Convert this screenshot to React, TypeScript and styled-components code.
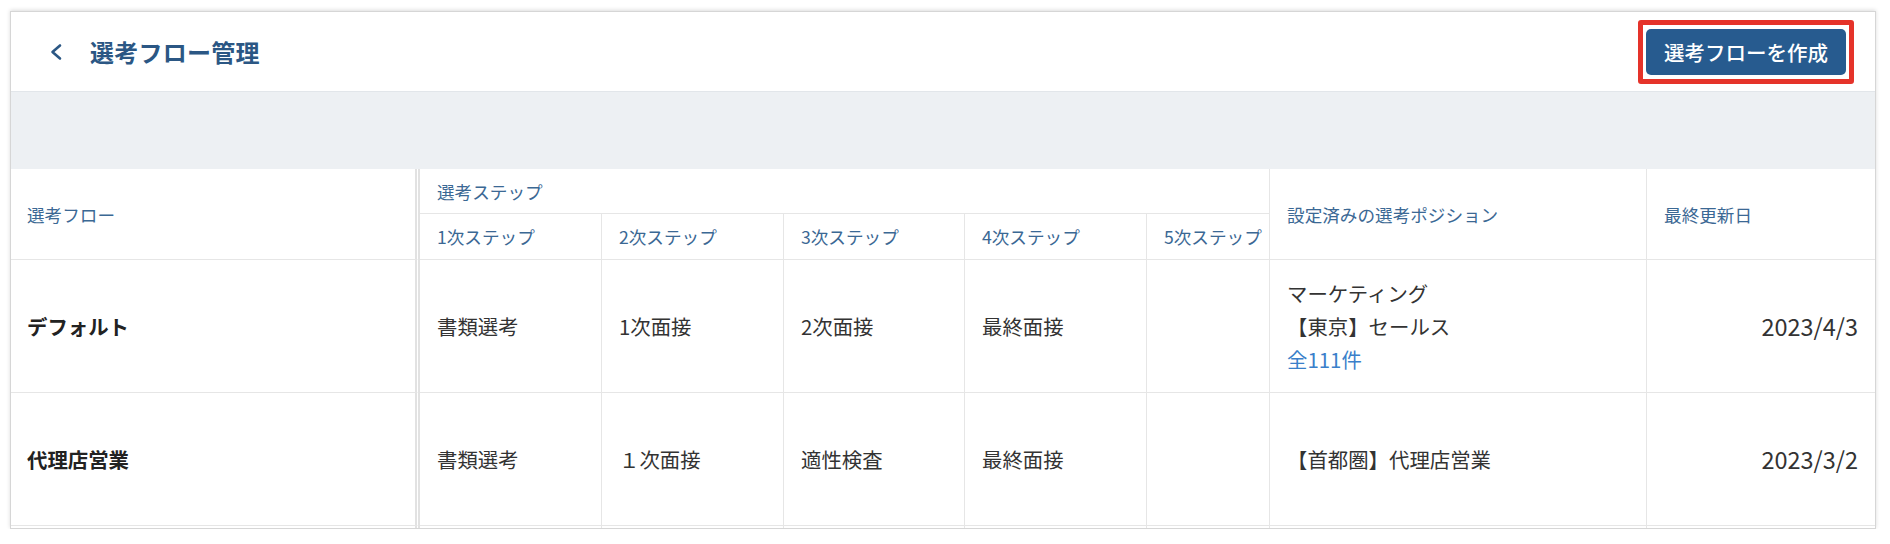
import styled, { createGlobalStyle } from "styled-components";

const GlobalStyle = createGlobalStyle`
  * {
    box-sizing: border-box;
  }
  body {
    margin: 0;
    background: #ffffff;
    font-family: "Noto Sans CJK JP", "Noto Sans", sans-serif;
    color: #333333;
  }
`;

const Card = styled.section`
  width: 1866px;
  height: 518px;
  margin: 11px 0 0 10px;
  border: 1px solid #d6d6d6;
  box-shadow: 0 -1px 4px rgba(0, 0, 0, 0.14);
  background: #ffffff;
  overflow: hidden;
`;

const Header = styled.header`
  display: flex;
  align-items: center;
  justify-content: space-between;
  height: 80px;
  padding: 0 21px 0 38px;
  border-bottom: 1px solid #e2e6ea;
`;

const TitleGroup = styled.div`
  display: flex;
  align-items: center;
  gap: 27px;
`;

const BackButton = styled.button`
  display: flex;
  align-items: center;
  padding: 0;
  border: none;
  background: none;
  color: #2b5784;
  cursor: pointer;
`;

const Title = styled.h1`
  margin: 0;
  font-size: 24px;
  font-weight: 700;
  color: #2b5784;
  letter-spacing: 0.01em;
`;

const Highlight = styled.div`
  padding: 4px 3px;
  border: 5px solid #e5332a;
  border-radius: 3px;
`;

const CreateButton = styled.button`
  display: flex;
  align-items: center;
  justify-content: center;
  width: 200px;
  height: 46px;
  border: none;
  border-radius: 5px;
  background: #275b8f;
  color: #ffffff;
  font-family: inherit;
  font-size: 20.5px;
  font-weight: 500;
  cursor: pointer;
`;

const Band = styled.div`
  height: 77px;
  background: #edf0f3;
`;

const Table = styled.table`
  width: 100%;
  table-layout: fixed;
  border-collapse: separate;
  border-spacing: 0;
`;

const Row = styled.tr<{ $h: number }>`
  height: ${(p) => p.$h}px;
`;

const HeadCell = styled.th<{ $first?: boolean; $last?: boolean }>`
  padding: 0 0 0 ${(p) => (p.$first ? 16 : 17)}px;
  text-align: left;
  vertical-align: middle;
  font-size: 17.6px;
  font-weight: 400;
  color: #3b6894;
  white-space: nowrap;
  overflow: hidden;
  border-bottom: 1px solid #e6e6e6;
  border-right: ${(p) =>
    p.$first ? "5px double #e2e2e2" : p.$last ? "none" : "1px solid #e6e6e6"};
`;

const Cell = styled.td<{
  $first?: boolean;
  $last?: boolean;
  $bold?: boolean;
  $right?: boolean;
}>`
  padding: ${(p) => (p.$right ? "0 17px 0 0" : `0 0 0 ${p.$first ? 16 : 17}px`)};
  text-align: ${(p) => (p.$right ? "right" : "left")};
  vertical-align: middle;
  font-size: ${(p) => (p.$right ? 23.5 : 20.4)}px;
  font-weight: ${(p) => (p.$bold ? 700 : 400)};
  color: ${(p) => (p.$bold ? "#222222" : "#333333")};
  white-space: nowrap;
  border-bottom: 1px solid #e6e6e6;
  border-right: ${(p) =>
    p.$first ? "5px double #e2e2e2" : p.$last ? "none" : "1px solid #e6e6e6"};
`;

const PositionList = styled.div`
  display: flex;
  flex-direction: column;
  line-height: 33px;
`;

const MoreLink = styled.a`
  color: #3a7fca;
  text-decoration: none;
  cursor: pointer;
`;

const colWidths = [409, 182, 182, 181, 182, 123, 377, 228];

const flows = [
  {
    name: "デフォルト",
    steps: ["書類選考", "1次面接", "2次面接", "最終面接", ""],
    positions: ["マーケティング", "【東京】セールス"],
    more: "全111件",
    updated: "2023/4/3",
  },
  {
    name: "代理店営業",
    steps: ["書類選考", "１次面接", "適性検査", "最終面接", ""],
    positions: ["【首都圏】代理店営業"],
    more: "",
    updated: "2023/3/2",
  },
];

const ChevronLeft = () => (
  <svg width="14" height="18" viewBox="0 0 14 18" fill="none">
    <polyline
      points="11,2.5 3.5,9 11,15.5"
      stroke="currentColor"
      strokeWidth="2.6"
      strokeLinecap="round"
      strokeLinejoin="round"
    />
  </svg>
);

const App = () => {
  return (
    <>
      <GlobalStyle />
      <Card>
        <Header>
          <TitleGroup>
            <BackButton aria-label="戻る">
              <ChevronLeft />
            </BackButton>
            <Title>選考フロー管理</Title>
          </TitleGroup>
          <Highlight>
            <CreateButton>選考フローを作成</CreateButton>
          </Highlight>
        </Header>
        <Band />
        <Table>
          <colgroup>
            {colWidths.map((w, i) => (
              <col key={i} style={{ width: w }} />
            ))}
          </colgroup>
          <thead>
            <Row $h={45}>
              <HeadCell rowSpan={2} $first>
                選考フロー
              </HeadCell>
              <HeadCell colSpan={5}>選考ステップ</HeadCell>
              <HeadCell rowSpan={2}>設定済みの選考ポジション</HeadCell>
              <HeadCell rowSpan={2} $last>
                最終更新日
              </HeadCell>
            </Row>
            <Row $h={46}>
              {[1, 2, 3, 4, 5].map((n) => (
                <HeadCell key={n}>{n}次ステップ</HeadCell>
              ))}
            </Row>
          </thead>
          <tbody>
            {flows.map((flow) => (
              <Row $h={133} key={flow.name}>
                <Cell $first $bold>
                  {flow.name}
                </Cell>
                {flow.steps.map((step, i) => (
                  <Cell key={i}>{step}</Cell>
                ))}
                <Cell>
                  <PositionList>
                    {flow.positions.map((pos) => (
                      <span key={pos}>{pos}</span>
                    ))}
                    {flow.more && <MoreLink>{flow.more}</MoreLink>}
                  </PositionList>
                </Cell>
                <Cell $last $right>
                  {flow.updated}
                </Cell>
              </Row>
            ))}
            <Row $h={40}>
              <Cell $first />
              {[0, 1, 2, 3, 4, 5].map((i) => (
                <Cell key={i} />
              ))}
              <Cell $last />
            </Row>
          </tbody>
        </Table>
      </Card>
    </>
  );
};

export default App;
